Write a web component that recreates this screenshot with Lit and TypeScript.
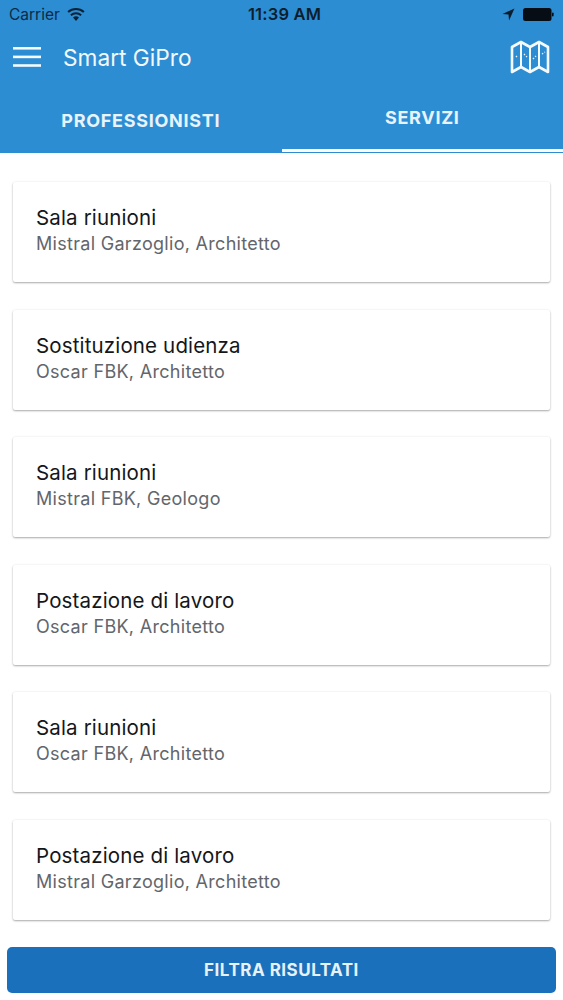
import { LitElement, html, css, svg } from "lit";
import { customElement } from "lit/decorators.js";

const items = [
  ["Sala riunioni", "Mistral Garzoglio, Architetto"],
  ["Sostituzione udienza", "Oscar FBK, Architetto"],
  ["Sala riunioni", "Mistral FBK, Geologo"],
  ["Postazione di lavoro", "Oscar FBK, Architetto"],
  ["Sala riunioni", "Oscar FBK, Architetto"],
  ["Postazione di lavoro", "Mistral Garzoglio, Architetto"],
];

@customElement("app-root")
export class AppRoot extends LitElement {
  static styles = css`
    :host { display: block; width: 563px; height: 1000px; background: #fff; overflow: hidden; font-family: Inter, Roboto, sans-serif; }
    .page { display: flex; flex-direction: column; height: 1000px; }
    header { background: #2d8dd3; height: 153px; display: flex; flex-direction: column; color: #fff; flex: none; }
    .status { height: 28px; display: grid; grid-template-columns: 1fr auto 1fr; align-items: center; padding: 0 9px; color: #0a2a45; font-size: 15.5px; }
    .carrier { display: flex; align-items: center; gap: 7px; }
    .time { font-weight: 600; color: #0b1e2e; font-size: 16.5px; letter-spacing: .2px; padding-left: 6px; }
    .right { display: flex; align-items: center; justify-content: flex-end; gap: 8px; }
    .toolbar { height: 58px; display: flex; align-items: center; padding: 0 13px; }
    .title { font-size: 22.7px; margin-left: 22px; flex: 1; color: #f2f9fd; }
    .tabs { flex: 1; display: flex; }
    .tab { flex: 1; display: flex; flex-direction: column; font-weight: 700; font-size: 18px; letter-spacing: .7px; color: #e8f4fb; }
    .tab span { flex: 1; display: flex; align-items: center; justify-content: center; padding-top: 5px; }
    .tab.active span { padding-top: 1px; padding-bottom: 2px; }
    .tab.active .bar { background: #fff; height: 3px; margin-bottom: 1px; }
    .tab .bar { height: 4px; }
    main { flex: 1; padding: 29px 13px 0; display: flex; flex-direction: column; gap: 27.6px; }
    .card { height: 100px; border-radius: 2px; background: #fff; box-shadow: 0 1px 2px rgba(0,0,0,.32), 0 0 3px rgba(0,0,0,.06); padding: 0 23px 3px; display: flex; flex-direction: column; justify-content: center; box-sizing: border-box; }
    .name { font-size: 20.5px; line-height: 27px; color: #14161a; letter-spacing: .15px; }
    .sub { font-size: 18px; line-height: 26px; color: #62666c; letter-spacing: .3px; }
    .btn { margin: 0 7px 7px 7px; height: 46px; background: #1b70bb; border-radius: 5px; color: #e6f2fa; font-weight: 700; font-size: 17px; letter-spacing: .5px; display: flex; align-items: center; justify-content: center; flex: none; }
    svg { display: block; }
  `;

  render() {
    return html`<div class="page">
      <header>
        <div class="status">
          <div class="carrier">Carrier
            <svg width="18" height="13" viewBox="0 0 18 13" fill="#0a2236">
              <path d="M9 13 L6 9.6 A4.6 4.6 0 0 1 12 9.6 Z"/>
              <path d="M4.5 7.9 L3.2 6.4 A8.8 8.8 0 0 1 14.8 6.4 L13.5 7.9 A6.8 6.8 0 0 0 4.5 7.9 Z"/>
              <path d="M1.8 4.8 L.4 3.3 A13 13 0 0 1 17.6 3.3 L16.2 4.8 A11 11 0 0 0 1.8 4.8 Z"/>
            </svg>
          </div>
          <div class="time">11:39 AM</div>
          <div class="right">
            <svg width="13" height="13" viewBox="0 0 12 12" fill="#0b1e2e"><path d="M11.5 .5 L.5 5.5 L6 6 L6.5 11.5 Z"/></svg>
            <svg width="31" height="13" viewBox="0 0 31 13"><rect x="0" y="0" width="28.5" height="13" rx="2.5" fill="#070d14"/><rect x="29" y="4.5" width="1.6" height="4" rx=".8" fill="#070d14"/></svg>
          </div>
        </div>
        <div class="toolbar">
          <svg width="28" height="20" viewBox="0 0 28 20" fill="#f4fafe"><rect y="0" width="28" height="2.6"/><rect y="8.6" width="28" height="2.6"/><rect y="17.2" width="28" height="2.6"/></svg>
          <div class="title">Smart GiPro</div>
          <svg width="40" height="34" viewBox="0 0 40 34" fill="none" stroke="#f4fafe" stroke-width="2.6" stroke-linejoin="round">
            ${svg`<path d="M2 7 L11 2 L20 7 L29 2 L38 7 V32 L29 27 L20 32 L11 27 L2 32 Z"/>
            <path d="M11 2 V27 M20 7 V32 M29 2 V27" stroke-width="2"/>
            <path d="M6 17 L8 15 M14 14 L17 17 M23 19 L26 16 M32 14 L35 12" stroke-width="1.3" stroke-dasharray="1.4 1.6"/>`}
          </svg>
        </div>
        <div class="tabs">
          <div class="tab"><span>PROFESSIONISTI</span><div class="bar"></div></div>
          <div class="tab active"><span>SERVIZI</span><div class="bar"></div></div>
        </div>
      </header>
      <main>
        ${items.map(([a, b]) => html`<div class="card"><div class="name">${a}</div><div class="sub">${b}</div></div>`)}
      </main>
      <div class="btn">FILTRA RISULTATI</div>
    </div>`;
  }
}
